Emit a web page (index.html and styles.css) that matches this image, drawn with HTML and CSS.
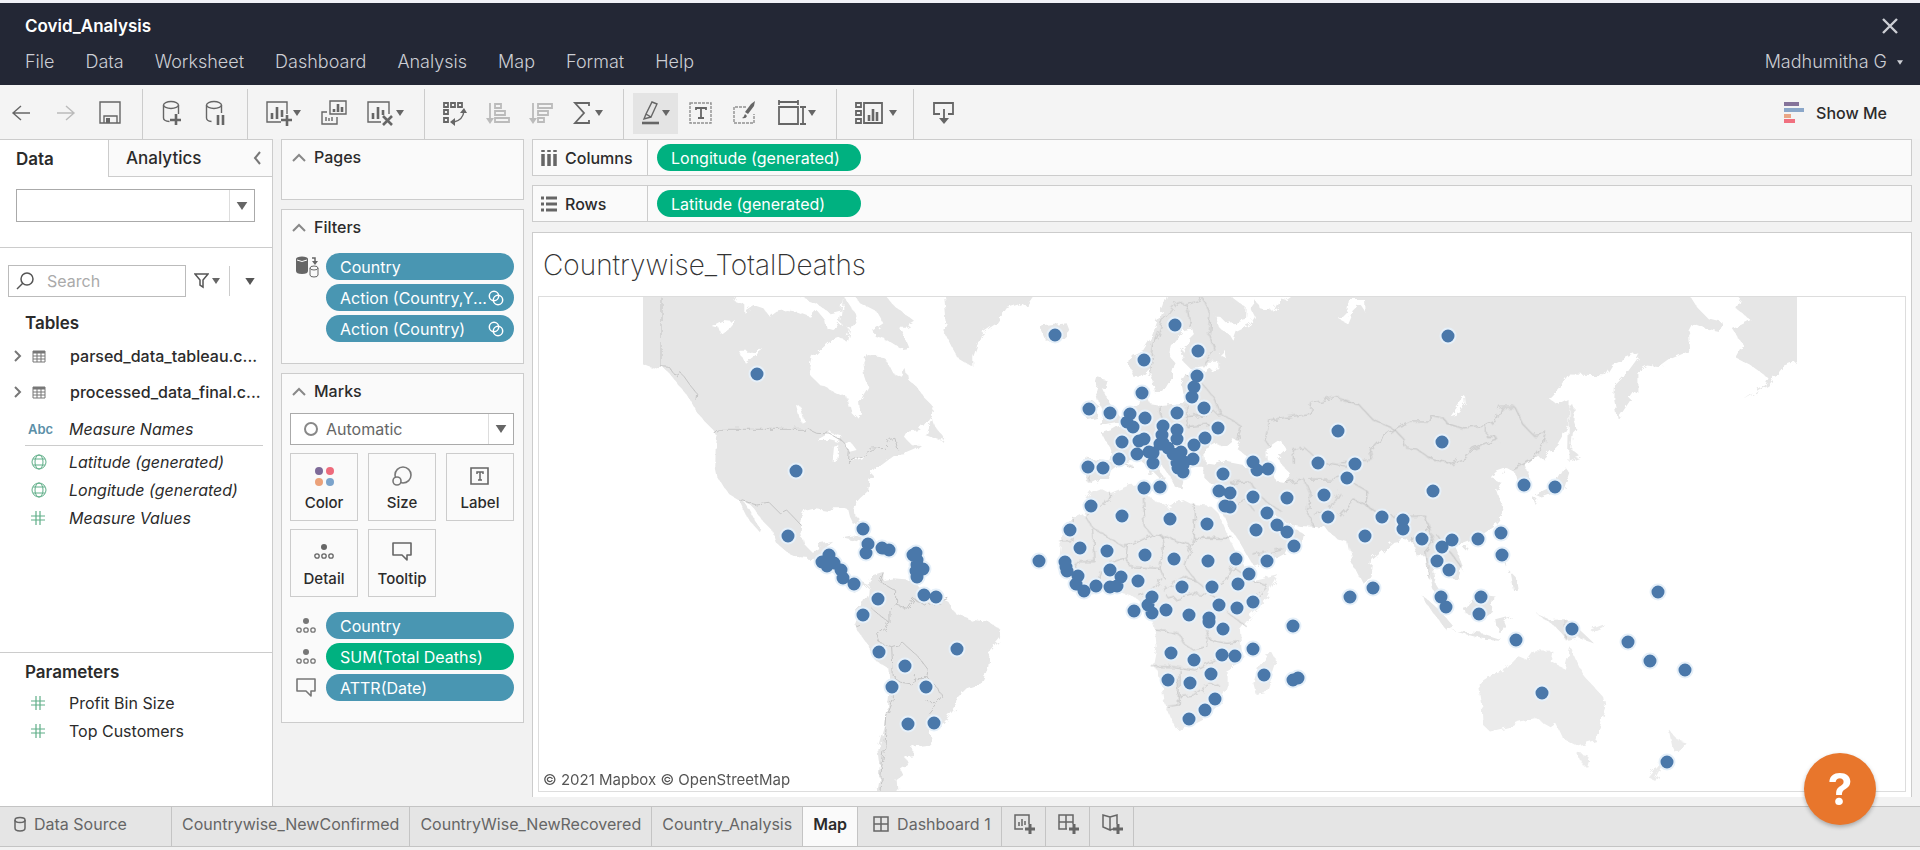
FILE: index.html
```html
<!DOCTYPE html>
<html lang="en">
<head>
<meta charset="utf-8">
<title>Covid_Analysis</title>
<meta name="viewport" content="width=device-width, initial-scale=1">
<link rel="stylesheet" href="styles.css">
</head>
<body>
<svg class="sprite" aria-hidden="true">
  <symbol id="caret" viewBox="0 0 8 6"><path d="M0 0h8L4 6z" fill="currentColor"/></symbol>
  <symbol id="chev-up" viewBox="0 0 14 9"><path d="M1 8l6-6 6 6" fill="none" stroke="currentColor" stroke-width="2"/></symbol>
  <symbol id="chev-right" viewBox="0 0 8 12"><path d="M1 1l5 5-5 5" fill="none" stroke="currentColor" stroke-width="2"/></symbol>
  <symbol id="grid" viewBox="0 0 14 13"><path d="M1 1h12v11H1zM1 3h12M1 6h12M1 9h12M5 3v9M9 3v9" fill="none" stroke="currentColor"/><path d="M1 1h12v2H1z" fill="currentColor"/></symbol>
  <symbol id="globe" viewBox="0 0 16 16"><g fill="none" stroke="currentColor"><circle cx="8" cy="8" r="7"/><ellipse cx="8" cy="8" rx="4" ry="7"/><path d="M2 5h12M2 11h12"/></g></symbol>
  <symbol id="hash" viewBox="0 0 14 14"><path d="M5 0v14M9 0v14M0 5h14M0 9h14" fill="none" stroke="currentColor" stroke-width="1.2"/></symbol>
  <symbol id="detail" viewBox="0 0 20 15"><circle cx="10" cy="3" r="3" fill="currentColor"/><g fill="none" stroke="currentColor" stroke-width="1.3"><circle cx="3" cy="12" r="2.2"/><circle cx="10" cy="12" r="2.2"/><circle cx="17" cy="12" r="2.2"/></g></symbol>
  <symbol id="bubble" viewBox="0 0 20 19"><path d="M1 1h18v12h-4v5l-5-5H1z" fill="none" stroke="currentColor" stroke-width="1.6" stroke-linejoin="round"/></symbol>
  <symbol id="rings" viewBox="0 0 16 16"><g fill="none" stroke="currentColor" stroke-width="1.5"><circle cx="6" cy="6" r="4.7"/><circle cx="10" cy="10" r="4.7"/></g></symbol>
  <symbol id="plus" viewBox="0 0 10 10"><path d="M5 0v10M0 5h10" stroke="currentColor" stroke-width="3" fill="none"/></symbol>
</svg>

<header class="header">
  <div class="header-row">
    <h1 class="doc-title">Covid_Analysis</h1>
    <button class="close" aria-label="Close"><svg width="16" height="16" viewBox="0 0 16 16"><path d="M1 1l14 14M15 1L1 15" stroke="currentColor" stroke-width="2.4"/></svg></button>
  </div>
  <div class="header-row">
    <nav class="menu">
      <button>File</button><button>Data</button><button>Worksheet</button><button>Dashboard</button><button>Analysis</button><button>Map</button><button>Format</button><button>Help</button>
    </nav>
    <button class="user">Madhumitha G <svg width="6" height="5"><use href="#caret"/></svg></button>
  </div>
</header>

<div class="toolbar">
  <div class="tools">
    <button aria-label="Undo"><svg width="24" height="24" viewBox="0 0 24 24"><path d="M12 5l-8 7 8 7M4 12h17"/></svg></button>
    <button aria-label="Redo" class="dim"><svg width="24" height="24" viewBox="0 0 24 24"><path d="M12 5l8 7-8 7M20 12H3"/></svg></button>
    <button aria-label="Save"><svg width="24" height="24" viewBox="0 0 24 24"><path d="M1 1h20v21H1zM5 22v-7h13v7" /><path d="M7 17h4v5H7z" class="solid"/></svg></button>
  </div>
  <div class="tools tools-data">
    <button aria-label="New data source"><svg width="24" height="26" viewBox="0 0 24 26"><ellipse cx="10" cy="5" rx="7.5" ry="3.5"/><path d="M2.500 5v13q0 3 6 3.500M17.500 5v9"/><path d="M15 14v11M9 20h11" class="thick"/></svg></button>
    <button aria-label="Pause updates"><svg width="24" height="26" viewBox="0 0 24 26"><ellipse cx="10" cy="5" rx="7.500" ry="3.500"/><path d="M2.500 5v13q0 3 5 3.500M17.500 5v8"/><path d="M14 15v10M19 15v10" class="thick"/></svg></button>
  </div>
  <div class="tools tools-sheet">
    <button aria-label="New worksheet"><svg width="26" height="26" viewBox="0 0 26 26"><path d="M15 22H1V2h20v12"/><path d="M6 13v6M11 7v12M16 10v7M21 15v11M15 20h11" class="thick"/></svg><svg class="caret"><use href="#caret"/></svg></button>
    <button aria-label="Duplicate"><svg width="26" height="26" viewBox="0 0 26 26"><path d="M9 1h16v13H9zM6 12H1v12h15v-7M5 17v4M8 18v3M11 17v4"/><path d="M13 9v3M17 4v8M21 7v5" class="thick"/></svg></button>
    <button aria-label="Clear sheet"><svg width="28" height="26" viewBox="0 0 28 26"><path d="M14 22H1V2h21v12"/><path d="M6 13v6M11 7v12M16 10v5M16 16l9 9M25 16l-9 9" class="thick"/></svg><svg class="caret"><use href="#caret"/></svg></button>
  </div>
  <div class="tools">
    <button aria-label="Swap rows and columns"><svg width="24" height="26" viewBox="0 0 24 26"><path d="M1 3h4v4H1zM8 3h4v4H8zM15 3h4v4h-4zM1 10h4v4H1zM1 18h4v4H1z" class="mid"/><path d="M21 11q-1 9-10 11"/><path d="M17 13l4-5 3 5zM12 18v8l-5-4z" class="solid"/></svg></button>
    <button aria-label="Sort ascending" class="dim"><svg width="24" height="24" viewBox="0 0 24 24"><path d="M4 2v17M9 3h6v4H9zM9 10h10v4H9zM9 17h14v4H9z" class="mid"/><path d="M0 17h8l-4 6z" class="solid"/></svg></button>
    <button aria-label="Sort descending" class="dim"><svg width="24" height="24" viewBox="0 0 24 24"><path d="M4 2v17M9 3h14v4H9zM9 10h10v4H9zM9 17h6v4H9z" class="mid"/><path d="M0 17h8l-4 6z" class="solid"/></svg></button>
    <button aria-label="Totals"><svg width="22" height="24" viewBox="0 0 22 24"><path d="M17 5V2H3l9 10-9 10h14v-3" class="mid"/></svg><svg class="caret"><use href="#caret"/></svg></button>
  </div>
  <div class="tools tools-format">
    <button aria-label="Highlight" class="active"><svg width="20" height="26" viewBox="0 0 20 26"><path d="M11 2l5 2-6 13-5-3zM5 14l-2 5 7-2"/><path d="M1 23h17" class="thick"/></svg><svg class="caret"><use href="#caret"/></svg></button>
    <button aria-label="Show labels"><svg width="24" height="24" viewBox="0 0 24 24"><path d="M1 2h21v20H1z" stroke-dasharray="3 1" opacity=".7"/><path d="M7 9V7h10v2M12 7v10M9 17h6" class="mid"/></svg></button>
    <button aria-label="Format"><svg width="24" height="24" viewBox="0 0 24 24"><path d="M13 6H1v16h20v-9" stroke-dasharray="3 1" opacity=".7"/><path d="M22 0l-1 5-6 8-3-2 6-8zM12 13l2 2q-1 3-5 2 2-1 3-4" class="solid"/></svg></button>
    <button aria-label="Fit"><svg width="30" height="26" viewBox="0 0 30 26"><path d="M2 7h19v17H2zM2 2h19M2 0v5M21 0v5M26 7v17M23 7h6M23 24h6" class="mid"/></svg><svg class="caret"><use href="#caret"/></svg></button>
  </div>
  <div class="tools tools-cards">
    <button aria-label="Show or hide cards"><svg width="33" height="24" viewBox="0 0 33 24"><path d="M1 2h5v4H1zM1 10h5v4H1zM1 18h5v4H1zM9 2h18v20H9z" class="mid"/><path d="M14 14v6M18 8v12M22 11v9" class="thick"/></svg><svg class="caret"><use href="#caret"/></svg></button>
  </div>
  <div class="tools tools-last">
    <button aria-label="Download"><svg width="24" height="26" viewBox="0 0 24 26"><path d="M8 14H2V3h19v11h-5M12 9v11" class="mid"/><path d="M7 18h10l-5 6z" class="solid"/></svg></button>
  </div>
  <button class="show-me"><svg width="20" height="22" viewBox="0 0 20 22"><path d="M0 0h15v4H0z" fill="#85739a"/><path d="M0 6h20v4H0z" fill="#8ba7c9"/><path d="M0 12h7v4H0z" fill="#e9a685"/><path d="M0 17h11v4H0z" fill="#f0707f"/></svg>Show Me</button>
</div>

<main class="work">
  <aside class="data-pane">
    <div class="pane-tabs">
      <button class="pane-tab current">Data</button>
      <button class="pane-tab">Analytics <svg width="8" height="14" viewBox="0 0 8 14"><path d="M7 1L2 7l5 6" fill="none" stroke="#777" stroke-width="2"/></svg></button>
    </div>
    <div class="source">
      <label class="select"><select aria-label="Data source"><option></option></select><svg width="12" height="8"><use href="#caret"/></svg></label>
    </div>
    <div class="find">
      <label class="search"><svg width="18" height="18" viewBox="0 0 18 18"><g fill="none" stroke="#555" stroke-width="1.500"><circle cx="11" cy="7" r="6"/><path d="M7 11l-6 6"/></g></svg><input type="text" placeholder="Search" aria-label="Search"></label>
      <button class="filter" aria-label="Filter fields"><svg width="15" height="16" viewBox="0 0 15 16"><path d="M1 1h13L9 7v7l-3-2V7z" fill="none" stroke="#555" stroke-width="1.500"/></svg><svg class="caret"><use href="#caret"/></svg></button>
      <button class="more" aria-label="More options"><svg width="10" height="7"><use href="#caret"/></svg></button>
    </div>
    <section class="fields">
      <h2>Tables</h2>
      <ul>
        <li class="table-row"><svg width="8" height="12"><use href="#chev-right"/></svg><svg width="14" height="13"><use href="#grid"/></svg><span>parsed_data_tableau.c...</span></li>
        <li class="table-row"><svg width="8" height="12"><use href="#chev-right"/></svg><svg width="14" height="13"><use href="#grid"/></svg><span>processed_data_final.c...</span></li>
      </ul>
      <ul class="measures">
        <li class="names"><b>Abc</b><i>Measure Names</i></li>
        <li><svg width="16" height="16"><use href="#globe"/></svg><i>Latitude (generated)</i></li>
        <li><svg width="16" height="16"><use href="#globe"/></svg><i>Longitude (generated)</i></li>
        <li><svg width="14" height="14"><use href="#hash"/></svg><i>Measure Values</i></li>
      </ul>
    </section>
    <section class="fields params">
      <h2>Parameters</h2>
      <ul class="measures">
        <li><svg width="14" height="14"><use href="#hash"/></svg><span>Profit Bin Size</span></li>
        <li><svg width="14" height="14"><use href="#hash"/></svg><span>Top Customers</span></li>
      </ul>
    </section>
  </aside>

  <div class="cards">
    <section class="card pages"><h3><svg width="14" height="9"><use href="#chev-up"/></svg>Pages</h3></section>
    <section class="card filters">
      <h3><svg width="14" height="9"><use href="#chev-up"/></svg>Filters</h3>
      <ul class="pills">
        <li><svg width="23" height="22" viewBox="0 0 23 22"><path d="M0 3v12q0 3 6 3t6-3V3z" fill="#666"/><ellipse cx="6" cy="3" rx="6" ry="2.500" fill="#666"/><path d="M1 4q5 3 10 0" stroke="#fff" fill="none"/><path d="M14 12v7q0 2 4 2t4-2v-7z" stroke="#666" fill="#fafafa"/><path d="M16 2h3v4" stroke="#666" stroke-width="1.500" fill="none"/><path d="M16 5h6l-3 4z" fill="#666"/><ellipse cx="18" cy="12" rx="4" ry="2" stroke="#666" fill="#fafafa"/></svg><button class="pill">Country</button></li>
        <li><button class="pill">Action (Country,Y...<svg width="16" height="16"><use href="#rings"/></svg></button></li>
        <li><button class="pill">Action (Country)<svg width="16" height="16"><use href="#rings"/></svg></button></li>
      </ul>
    </section>
    <section class="card marks">
      <h3><svg width="14" height="9"><use href="#chev-up"/></svg>Marks</h3>
      <label class="select mark-type"><svg class="ring" width="14" height="14" viewBox="0 0 14 14"><circle cx="7" cy="7" r="6" fill="none" stroke="#888" stroke-width="2"/></svg><select aria-label="Mark type"><option>Automatic</option></select><svg width="12" height="8"><use href="#caret"/></svg></label>
      <div class="mark-buttons">
        <button><svg width="20" height="20" viewBox="0 0 20 20"><circle cx="5" cy="5" r="4" fill="#7d6a98"/><circle cx="16" cy="5" r="4" fill="#ee6a7b"/><circle cx="5" cy="16" r="4" fill="#eba179"/><circle cx="16" cy="16" r="4" fill="#7ba3cb"/></svg>Color</button>
        <button><svg width="20" height="20" viewBox="0 0 20 20"><g fill="#fafafa" stroke="#777" stroke-width="1.600"><circle cx="11" cy="9" r="8"/><circle cx="5" cy="15" r="4"/></g></svg>Size</button>
        <button><svg width="20" height="20" viewBox="0 0 20 20"><g fill="none" stroke="#666"><path d="M1 2h17v16H1z" stroke-width="1.600"/><path d="M7 8V6h6v2M10 6v8M8 14h4" stroke-width="1.500"/></g></svg>Label</button>
        <button><svg width="20" height="20" viewBox="0 -2 20 20"><use href="#detail" width="20" height="15"/></svg>Detail</button>
        <button><svg width="20" height="20"><use href="#bubble" width="20" height="19"/></svg>Tooltip</button>
      </div>
      <ul class="pills">
        <li><svg width="20" height="15"><use href="#detail"/></svg><button class="pill">Country</button></li>
        <li><svg width="20" height="15"><use href="#detail"/></svg><button class="pill green">SUM(Total Deaths)</button></li>
        <li><svg width="20" height="19"><use href="#bubble"/></svg><button class="pill">ATTR(Date)</button></li>
      </ul>
    </section>
  </div>

  <div class="canvas">
    <div class="shelf"><h3><svg width="16" height="16" viewBox="0 0 16 16"><path d="M2 0v2M8 0v2M14 0v2M2 4v12M8 4v12M14 4v12" stroke="#666" stroke-width="3.500"/></svg>Columns</h3><button class="pill green">Longitude (generated)</button></div>
    <div class="shelf"><h3><svg width="16" height="16" viewBox="0 0 16 16"><path d="M0 2h3M0 8h3M0 14h3M5 2h11M5 8h11M5 14h11" stroke="#666" stroke-width="3"/></svg>Rows</h3><button class="pill green">Latitude (generated)</button></div>
    <section class="viz">
      <h2 class="viz-title">Countrywise_TotalDeaths</h2>
      <div class="map">
        <svg class="world" viewBox="538 297 1368 494" preserveAspectRatio="xMidYMid slice" role="img" aria-label="World map with one mark for each country">
          <defs>
            <filter id="coast" x="0" y="0" width="1" height="1"><feTurbulence type="fractalNoise" baseFrequency=".12" numOctaves="3" seed="4"/><feDisplacementMap in="SourceGraphic" scale="8"/></filter>
            <clipPath id="extent"><path d="M643 297H1797V791H643z"/></clipPath>
          </defs>
          <g clip-path="url(#extent)">
          <g class="land" filter="url(#coast)">
            <path class="sea" d="M538 290H1906V800H538z"/>
            <g transform="translate(630 280) scale(.3333)">
              <path d="M10 20V240L55 258 88 268 98 262 118 280 150 320 175 350 200 395 225 425 250 450 262 470 257 500 256 560 262 590 280 620 295 640 325 658 345 700 370 735 395 762 390 745 370 715 352 680 340 662 365 678 385 705 405 730 430 755 440 790 470 815 515 835 550 838 575 850 600 875 625 885 640 915 670 935 700 925 715 915 690 905 660 895 645 870 640 850 615 845 590 830 585 805 610 785 575 792 565 810 545 815 520 790 512 755 515 720 530 695 560 688 590 692 610 685 640 685 655 690 660 710 672 735 682 730 678 700 668 680 690 655 715 632 718 600 735 570 775 540 800 522 820 520 855 505 870 492 840 490 822 470 830 455 870 450 895 418 912 395 905 375 880 350 860 320 835 300 830 270 815 290 790 280 770 240 745 225 710 222 700 245 705 290 715 320 700 345 690 365 693 400 680 415 665 400 655 355 620 340 590 325 565 310 545 290 538 260 545 230 575 200 600 180 625 170 650 185 660 150 640 130 610 150 590 145 585 120 560 90 540 110 500 95 470 90 440 95 420 110 400 85 370 75 340 95 340 70 310 60 330 20z"/>
              <path d="M480 40L560 70 600 100 640 90 640 40zM670 40H760L790 75 855 125 830 140 810 140 835 200 810 205 770 180 735 170 730 150 760 130 740 95 690 70zM905 415L912 435 940 470 935 482 885 465zM640 48l40 60-20 40-30-20zM635 772L670 766 700 776 740 790 735 797 700 785zM940 20L950 130 940 150 965 200 985 235 1030 262 1030 230 1055 160 1100 130 1130 85 1190 65 1210 20zM750 795l40 0 5 15-45 0z"/>
              <path d="M715 900L730 885 760 875 760 900 790 895 850 900 870 925 920 950 955 965 975 1000 1030 1020 1075 1025 1112 1050 1110 1075 1080 1110 1075 1160 1055 1210 1010 1225 980 1255 975 1285 940 1330 900 1345 905 1380 890 1395 850 1400 850 1425 825 1430 835 1450 810 1465 820 1485 800 1500 805 1560H735L745 1500 750 1450 745 1410 765 1340 775 1270 780 1220 775 1165 735 1140 710 1090 685 1055 672 1030 680 1010 675 985 700 965 712 940z"/>
              <path class="sea" d="M245 138L280 120 318 124 300 145 275 165 268 145zM330 215L365 215 400 208 370 230 345 248zM498 375L512 380 522 420 512 425zM560 480L600 458 640 470 620 485 600 480zM612 500L625 495 622 545 608 545zM640 485L665 490 680 510 660 515zM665 545L700 525 695 535z"/>
            </g>
            <g transform="translate(1020 280) scale(.3333)">
              <path d="M450 20L430 80 410 130 395 170 370 210 335 225 330 260 340 290 365 290 390 265 400 300 405 340 430 335 445 310 455 285 465 250 450 230 455 200 475 175 490 150 515 145 525 165 500 190 485 215 490 245 510 265 555 258 580 265 560 280 500 285 485 310 490 340 500 360 480 370 420 375 390 370 380 345 385 320 360 325 355 375 330 390 310 430 275 450 245 460 260 490 280 520 275 545 195 535 190 560 195 600 215 610 235 600 270 600 275 575 300 555 320 545 360 540 385 560 415 590 425 605 435 595 420 570 395 540 400 530 430 560 450 590 465 620 485 625 490 605 480 590 510 570 530 560 550 560 550 590 570 610 600 615 615 640 605 690 625 740 655 780 690 840 705 860 760 840 850 790 855 765 825 745 800 765 780 760 760 730 740 700 760 700 800 730 840 738 880 740 910 735 930 760 960 780 980 785 995 800V20zM235 295L260 300 250 330 270 370 300 410 295 425 240 435 255 400 235 370 225 330zM190 380l25-20 20 15-5 35-30 8zM60 140L100 135 140 130 150 155 125 180 80 185zM0 48h35l-15 22-20 8zM415 600l25-5-5 15zM385 560l10 0 0 28-10 0z"/>
              <path class="sea" d="M555 550L552 510 590 490 610 502 640 478 660 485 650 505 700 545 670 555 620 545 590 555zM740 505L780 478 800 510 775 535 790 560 810 580 800 610 770 605 755 570 740 535zM575 20L640 55 680 85 678 120 640 130 605 110 590 110 600 145 630 165 640 182 650 155 690 135 705 110 690 80 705 60 720 85 760 95 780 55 800 60 860 20zM600 225l15-15 5 25zM560 245l35 0 0 20-35 5z"/>
              <path d="M575 45L640 65 675 95 665 120 620 130 590 100z"/>
              <path class="africa" d="M215 635L240 625 270 640 330 615 390 610 395 625 385 650 440 680 465 670 490 660 520 675 575 680 595 700 640 800 660 840 690 880 700 900 775 882 765 905 730 970 690 1010 660 1050 665 1110 670 1140 620 1170 620 1220 600 1270 560 1310 510 1335 470 1348 455 1320 435 1270 425 1210 400 1150 410 1100 405 1050 390 1000 370 970 330 945 270 930 190 940 150 900 120 850 125 800 120 770 150 720 195 700 190 670zM755 1115L768 1140 735 1240 710 1245 700 1210 715 1160z"/>
            </g>
            <g transform="translate(1340 280) scale(.3571 .3636)">
              <path d="M0 20H965L1000 75 1030 105 1070 115 1060 140 1030 135 990 120 975 150 978 195 930 215 895 240 860 235 830 250 830 305 800 350 778 382 768 330 770 290 800 260 830 220 840 200 810 210 760 230 740 262 640 260 610 300 585 325 610 345 640 330 640 400 610 450 570 490 545 490 520 510 530 540 525 580 500 575 490 530 470 520 440 530 425 545 455 560 440 580 460 640 430 680 390 705 350 720 320 730 345 790 335 820 300 820 280 790 260 790 265 830 290 870 305 900 290 900 260 850 250 800 240 760 215 760 205 720 180 715 150 720 90 770 85 820 62 832 35 780 20 710 0 690z"/>
              <path d="M1130 20H1310V215L1240 240 1200 290 1130 330 1190 290 1200 270 1150 235 1110 215 1130 180 1100 135 1150 110 1110 80zM642 345l12 0 0 40 8 25-10 10-5 50-8 0zM640 460L672 485 640 498zM630 515L642 530 625 580 570 600 545 590 600 565zM538 597l15 5-8 14zM225 862L275 905 320 955 300 965 260 915zM315 965L400 972 455 990 400 987zM350 900L390 860 430 865 425 910 390 935 355 920zM440 935l40-10-20 15 8 20-10-5-5 15-8 0zM550 918L590 935 640 932 680 970 712 1000 670 985 640 992 600 950zM475 800l20 20 5 30-15 5zM345 735l15-5-8 14zM452 760l15 5-5 20zM76 828l22 5-2 28-18 0z"/>
              <path class="africa" d="M388 1110L410 1095 465 1070 500 1035 525 1045 545 1018 595 1020 590 1050 630 1068 645 1010 665 1055 680 1085 740 1150 745 1180 715 1265 665 1280 625 1260 605 1220 590 1230 545 1205 500 1215 470 1230 420 1242 402 1225 400 1180zM667 1305L697 1310 690 1335 680 1335zM920 1235L945 1265 968 1272 940 1300 930 1280zM915 1310L880 1375 865 1368zM700 962l40-15-5 8-28 12z"/>
              <path class="sea" d="M310 375L350 318 352 340 325 370zM0 110L20 90 25 55 70 55 72 90 55 65 35 85 20 120z"/>
            </g>
          </g>
          <g class="borders" filter="url(#coast)">
            <g transform="translate(630 280) scale(.3333)"><path d="M93 50V260L118 262 135 285 150 275 175 310 200 340 198 360M250 460L265 448H535L560 460 600 462 640 485 658 515 655 548 690 530 725 508 765 505 780 478 795 475 803 508M325 658L380 675 420 670 450 700 470 690 515 737M760 878L750 905 800 935 800 975 830 985 850 955 890 980 955 955M800 975L780 990 780 1030 740 1060 750 1090 785 1100 820 1090 865 1130 895 1170 890 1190 855 1190 850 1215 815 1210 790 1190 785 1100M730 990L780 1030M790 1190V1260L770 1310 765 1400 755 1460 750 1535M890 1190L925 1225 935 1250 895 1300M890 1265L925 1265M675 1035l18 5"/></g>
            <g transform="translate(1020 280) scale(.3333)"><path d="M390 290L400 200 430 120 470 65 500 75 512 145M500 75L550 55 570 100 565 160 585 210 550 250M500 285L545 310 580 350 600 400 665 440 650 480M500 410L600 400M500 370V440L590 430M420 375V400L450 460M280 540L340 560M205 600L215 545M735 480L750 420 870 400 875 370 950 350 990 365M735 480L750 500M820 550V510L850 500 900 545 990 560M630 610L690 605 720 650 790 700M800 610L850 595 870 640 865 700 880 740M870 600L930 600 990 590M880 700L930 690 960 640M640 680L680 660 700 690M700 825L790 805M268 635V660L240 675 195 710 220 745 310 800 325 800 395 765 375 740 370 650M395 765L430 770 515 798 523 775V672M523 775H640M118 782H155L160 715M160 845H225L220 745M325 800L320 835 280 850 250 860 240 890M320 835L330 860 420 865 430 800 425 765M420 865L430 890 400 930 360 950M515 798L495 860 525 900 560 930 620 900 640 860 660 830M430 930L490 890 525 900M440 945L450 960 520 940 570 945 600 960M640 860L690 900 740 915 700 960M600 960L580 1000 560 1050 570 1080 620 1090 660 1085M625 1000L680 1040M405 1050L450 1055 480 1065 490 1090 520 1110 560 1100 560 1070M395 1160H460L525 1170 570 1145 610 1130 660 1125M480 1170V1250L520 1245 570 1210 600 1220M475 1200V1275L440 1280M120 850L165 850 175 880M240 890V930M285 870V930"/></g>
            <g transform="translate(1340 280) scale(.3571 .3636)"><path d="M0 330L50 340 90 382 152 410 195 388 248 388 255 372 290 380 300 395 350 410 410 400 440 385 450 350 490 350 515 400 540 425 578 420 570 450 545 490 485 522M152 410L180 440 185 462 215 465 250 490 310 505 350 490 375 465 440 440 435 430 410 430 410 400M152 410L110 440 85 465 90 495 0 500M40 560L75 580 75 620 110 640 160 650 200 650 240 650 250 680 200 720M75 620L40 605 0 650M250 680L260 720 240 745 250 820M270 700L340 790M634 932V990"/></g>
          </g>
          </g>
          <defs><path id="marks" d="M757 374h0M796 471h0M788 536h0M863 529h0M868 544h0M866 553h0M882 548h0M889 550h0M829 555h0M822 562h0M827 566h0M834 563h0M841 570h0M843 578h0M854 584h0M878 599h0M863 615h0M879 652h0M905 666h0M892 687h0M926 687h0M908 724h0M934 723h0M957 649h0M913 555h0M916 553h0M917 560h0M923 569h0M917 565h0M916 571h0M917 577h0M924 595h0M936 597h0M1055 335h0M1175 325h0M1198 351h0M1144 360h0M1197 376h0M1194 387h0M1192 397h0M1142 393h0M1204 408h0M1089 409h0M1110 413h0M1130 414h0M1127 422h0M1133 427h0M1145 418h0M1177 413h0M1163 426h0M1177 430h0M1218 428h0M1177 439h0M1205 438h0M1194 445h0M1122 442h0M1139 441h0M1144 439h0M1162 435h0M1160 444h0M1163 443h0M1168 448h0M1137 454h0M1149 452h0M1153 453h0M1153 463h0M1173 454h0M1181 452h0M1193 459h0M1181 459h0M1177 463h0M1178 468h0M1183 472h0M1183 465h0M1119 459h0M1088 467h0M1103 468h0M1144 488h0M1160 487h0M1253 462h0M1257 470h0M1268 469h0M1223 474h0M1219 491h0M1230 493h0M1225 506h0M1230 507h0M1253 497h0M1287 498h0M1267 513h0M1277 525h0M1287 532h0M1294 546h0M1256 530h0M1207 524h0M1170 519h0M1122 516h0M1091 506h0M1070 530h0M1080 548h0M1107 551h0M1145 555h0M1174 559h0M1208 561h0M1236 559h0M1267 561h0M1039 561h0M1065 562h0M1066 567h0M1067 571h0M1078 576h0M1076 584h0M1084 591h0M1096 586h0M1110 570h0M1121 577h0M1110 587h0M1117 586h0M1138 581h0M1182 587h0M1212 587h0M1238 584h0M1249 574h0M1152 597h0M1148 605h0M1134 611h0M1152 613h0M1166 610h0M1189 615h0M1219 605h0M1237 608h0M1253 602h0M1209 618h0M1209 622h0M1223 629h0M1293 626h0M1253 649h0M1222 655h0M1235 656h0M1171 653h0M1194 660h0M1211 674h0M1168 680h0M1190 683h0M1264 675h0M1293 680h0M1298 678h0M1215 699h0M1205 710h0M1189 719h0M1338 431h0M1318 463h0M1347 478h0M1324 495h0M1328 517h0M1350 597h0M1448 336h0M1442 442h0M1355 464h0M1433 491h0M1524 485h0M1555 487h0M1382 517h0M1403 520h0M1403 529h0M1365 536h0M1422 539h0M1442 547h0M1452 540h0M1478 539h0M1501 533h0M1502 555h0M1437 561h0M1449 570h0M1373 588h0M1441 597h0M1446 607h0M1481 597h0M1479 614h0M1516 640h0M1572 629h0M1658 592h0M1628 642h0M1650 661h0M1685 670h0M1542 693h0M1667 762h0"/></defs>
          <use href="#marks" class="halo"/><use href="#marks" class="dots"/>
        </svg>
        <p class="credit"><a href="#">© 2021 Mapbox</a> <a href="#">© OpenStreetMap</a></p>
      </div>
    </section>
  </div>
</main>

<footer class="sheets">
  <button class="sheet source-tab"><svg width="12" height="16" viewBox="0 0 12 16"><g fill="none" stroke="#666" stroke-width="1.500"><ellipse cx="6" cy="4" rx="5" ry="2.500"/><path d="M1 4v8q0 3 5 3t5-3V4"/></g></svg>Data Source</button>
  <button class="sheet">Countrywise_NewConfirmed</button>
  <button class="sheet">CountryWise_NewRecovered</button>
  <button class="sheet">Country_Analysis</button>
  <button class="sheet current">Map</button>
  <button class="sheet dash"><svg width="16" height="16" viewBox="0 0 16 16"><path d="M1 1h14v14H1zM8 1v14M1 8h14" fill="none" stroke="#666" stroke-width="1.500"/></svg>Dashboard 1</button>
  <button class="sheet add" aria-label="New worksheet"><svg width="21" height="21" viewBox="0 0 21 21"><path d="M9 15H1V1h14v9M5 8v4M8 5v7M11 7v4" fill="none" stroke="#666" stroke-width="1.500"/><use href="#plus" x="11" y="10" width="10" height="10"/></svg></button>
  <button class="sheet add" aria-label="New dashboard"><svg width="21" height="21" viewBox="0 0 21 21"><path d="M9 15H1V1h14v9M8 1v14M1 8h14" fill="none" stroke="#666" stroke-width="1.500"/><use href="#plus" x="11" y="10" width="10" height="10"/></svg></button>
  <button class="sheet add" aria-label="New story"><svg width="21" height="21" viewBox="0 0 21 21"><path d="M8 3L1 1v12l7 3zM8 3l7-2v9M8 16l3-1" fill="none" stroke="#666" stroke-width="1.500"/><use href="#plus" x="11" y="10" width="10" height="10"/></svg></button>
</footer>
<button class="help" aria-label="Help">?</button>
</body>
</html>
```
FILE: styles.css
```css
* { box-sizing: border-box; }
body { margin: 0; min-height: 100vh; display: flex; flex-direction: column; border-top: 3px solid #f0f1f7; background: #f2f2f2; color: #2b2b2b; font: 16px/20px Inter, "Liberation Sans", sans-serif; }
h1, h2, h3, p, ul { margin: 0; padding: 0; }
ul { list-style: none; }
button { margin: 0; padding: 0; border: 0; background: none; color: inherit; font: inherit; cursor: pointer; }
svg { display: block; flex: none; }
.sprite { position: absolute; width: 0; height: 0; }
.caret { width: 8px; height: 6px; color: #666; }

.header { display: flex; flex-direction: column; gap: 16px; height: 82px; padding: 13px 17px 0 25px; background: #232735; color: #ccced4; }
.header-row { display: flex; align-items: center; justify-content: space-between; height: 20px; }
.doc-title { color: #fff; font-size: 17px; font-weight: 600; line-height: 20px; }
.close { margin-right: 5px; }
.menu { display: flex; gap: 31px; font-size: 18px; font-weight: 300; }
.user { display: flex; align-items: center; gap: 10px; font-size: 18px; font-weight: 300; }

.toolbar { display: flex; align-items: center; height: 54px; padding-top: 4px; background: #f4f4f4; }
.tools { display: flex; align-items: center; gap: 19px; height: 50px; padding: 0 20px 2px 18px; border-right: 1px solid #ccc; }
.tools:first-child { gap: 21px; padding-left: 9px; padding-right: 19px; }
.tools .caret { margin-left: 1px; }
.tools-data { padding-right: 19px; }
.tools-sheet { gap: 20px; }
.tools-format { gap: 20px; padding-left: 9px; }
.tools-cards { padding-right: 16px; }
.tools-last { border: 0; }
.tools button { display: flex; align-items: center; color: #666; }
.tools .dim { color: #bbb; }
.tools .active { height: 41px; padding: 0 8px; margin-right: -9px; background: #e4e4e4; }
.tools svg path, .tools svg ellipse { fill: none; stroke: currentColor; stroke-width: 1.4; }
.tools svg .thick { stroke-width: 2.6; }
.tools svg .mid { stroke-width: 1.8; }
.tools svg .solid, .tools .caret path { fill: currentColor; stroke: none; }
.show-me { display: flex; align-items: center; gap: 12px; margin: 0 33px 2px auto; font-weight: 500; }

.work { flex: 1; display: flex; align-items: stretch; }
.data-pane { display: flex; flex-direction: column; width: 273px; flex: none; border-right: 1px solid #ccc; background: #fff; }
.pane-tabs { display: flex; height: 38px; border-top: 1px solid #ccc; }
.pane-tab { display: flex; align-items: center; justify-content: space-between; flex: 1; padding: 0 11px 0 17px; border: solid #ccc; border-width: 0 0 1px 1px; background: #fafafa; font-size: 17px; font-weight: 500; }
.pane-tab.current { flex: 0 0 108px; padding-left: 16px; border: 0; background: #fff; font-weight: 600; }
.source { padding: 12px 17px 25px 16px; border-bottom: 1px solid #ccc; }
.select { display: flex; align-items: center; height: 33px; padding-right: 6px; border: 1px solid #aaa; background: #fff; color: #666; }
.select select { flex: 1; min-width: 0; height: 100%; margin-right: 6px; padding: 0; border: 0; border-right: 1px solid #ddd; background: none; color: inherit; font: inherit; appearance: none; }
.find { display: flex; align-items: center; padding: 17px 17px 15px 8px; }
.search { display: flex; align-items: center; width: 178px; height: 32px; padding-left: 7px; gap: 13px; border: 1px solid #bbb; }
.search input { flex: 1; min-width: 0; padding: 0; border: 0; outline: 0; background: none; font: inherit; }
.search input::placeholder { color: #aaa; opacity: 1; }
.filter { display: flex; align-items: center; gap: 3px; height: 30px; padding: 0 9px 0 8px; border-right: 1px solid #ccc; }
.more { margin-left: auto; color: #555; }
.fields { flex: 1; }
.fields h2 { padding-left: 25px; font-size: 17px; font-weight: 600; line-height: 22px; }
.fields h2 + ul { padding-top: 4px; }
.table-row { display: flex; align-items: center; height: 36px; padding-left: 14px; gap: 10px; color: #777; }
.table-row span { padding-left: 14px; color: #2b2b2b; font-weight: 500; }
.measures li { display: grid; grid-template-columns: 44px 1fr; align-items: center; height: 28px; padding-left: 25px; color: #5fae88; }
.measures svg { justify-self: start; margin-left: 6px; }
.measures span, .measures i { color: #2b2b2b; }
.measures .names { height: 36px; margin: 0 9px 2px 25px; padding: 3px 0 0; border-bottom: 1px solid #ccc; color: #5b8fa8; }
.names b { padding-left: 3px; font-size: 13px; font-weight: 600; }
.params { flex: 0 0 154px; padding-top: 8px; border-top: 1px solid #ccc; }
.fields.params .measures { padding-top: 6px; }

.cards { display: flex; flex-direction: column; gap: 9px; flex: none; width: 243px; margin-left: 8px; }
.card { padding: 6px 9px 21px 8px; border: 1px solid #ccc; background: #fafafa; }
.pages { height: 61px; }
.card h3, .shelf h3 { display: flex; align-items: center; gap: 8px; font-size: 16px; font-weight: 500; line-height: 22px; }
.card h3 { padding-left: 2px; }
.card h3 svg { color: #888; }
.pills { display: flex; flex-direction: column; gap: 4px; padding-top: 15px; }
.pills li { display: flex; align-items: center; justify-content: space-between; height: 27px; padding-left: 6px; color: #777; }
.pill { display: flex; align-items: center; justify-content: space-between; width: 188px; height: 27px; margin-left: auto; padding: 0 10px 0 14px; border-radius: 14px; background: #4996b2; color: #fff; text-align: left; white-space: nowrap; }
.pill.green { background: #00b180; }
.mark-type { height: 32px; margin-top: 11px; }
.mark-type .ring { margin: 0 8px 0 13px; }
.mark-buttons { display: grid; grid-template-columns: repeat(3, 1fr); gap: 8px 10px; padding-top: 8px; }
.mark-buttons button { display: flex; flex-direction: column; align-items: center; gap: 7px; height: 68px; padding-top: 12px; border: 1px solid #ccc; font-size: 15px; font-weight: 500; color: #2b2b2b; }
.mark-buttons svg { color: #666; }

.canvas { flex: 1; min-width: 0; display: flex; flex-direction: column; gap: 9px; padding: 0 8px 9px; }
.shelf { display: flex; align-items: center; height: 37px; flex: none; border: 1px solid #ccc; background: #fafafa; }
.shelf h3 { width: 115px; height: 100%; padding-left: 8px; border-right: 1px solid #ccc; }
.shelf .pill { width: 204px; margin-left: 9px; }
.viz { flex: 1; display: flex; flex-direction: column; margin-top: 1px; padding: 0 5px 5px; border: 1px solid #ccc; border-bottom: 0; background: #fff; }
.viz-title { padding: 16px 5px 15px; color: #333; font-size: 28px; font-weight: 200; line-height: 32px; }
.map { position: relative; flex: 1; border: 1px solid #ddd; }
.world { position: absolute; inset: 0; width: 100%; height: 100%; }
.land { fill: #e6e6e6; }
.land .sea { fill: #fff; }
.land .africa { fill: #ebebeb; }
.borders { fill: none; stroke: #c4c4c4; stroke-width: 3; stroke-linejoin: round; }
.halo, .dots { fill: none; stroke-linecap: round; }
.halo { stroke: #e6f0f9; stroke-width: 17px; }
.dots { stroke: #4a78aa; stroke-width: 13px; }
.credit { position: absolute; left: 4px; bottom: 1px; font-size: 15px; line-height: 20px; }
.credit a { color: #555; text-decoration: none; }

.sheets { display: flex; height: 41px; margin-bottom: 3px; border: solid #c4c4c4; border-width: 1px 0; background: #e5e5e5; color: #666; }
.sheet { display: flex; align-items: center; gap: 8px; padding: 0 10px 5px; border-right: 1px solid #c4c4c4; white-space: nowrap; }
.source-tab { width: 172px; padding-left: 14px; }
.sheet.current { background: #fafafa; color: #2b2b2b; font-weight: 600; }
.dash { padding-left: 15px; }
.sheet.add { padding-left: 12px; padding-right: 10px; }
.help { position: fixed; right: 44px; bottom: 25px; width: 72px; height: 72px; border-radius: 50%; background: #e8762c; box-shadow: 0 2px 4px #0004; color: #fff; font-size: 44px; font-weight: 700; line-height: 72px; }
```
